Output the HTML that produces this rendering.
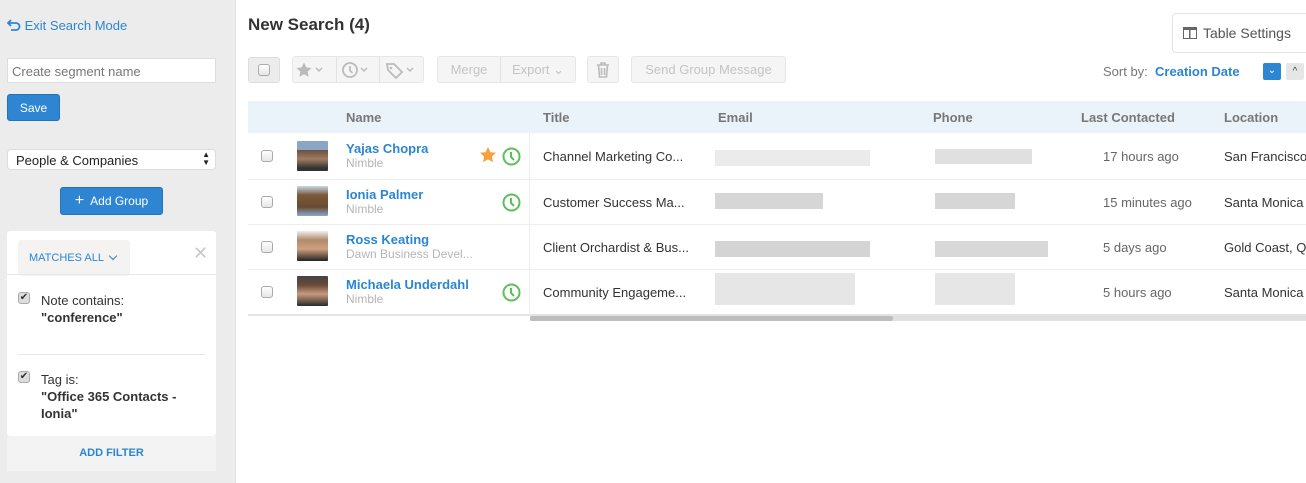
<!DOCTYPE html>
<html><head><meta charset="utf-8"><style>
*{box-sizing:border-box;margin:0;padding:0}
body{width:1306px;height:483px;overflow:hidden;font-family:"Liberation Sans",Arial,sans-serif;font-size:13px;color:#333;background:#fff;position:relative}
.a{position:absolute}
.side{left:0;top:0;width:236px;height:483px;background:#ececec;border-right:1px solid #e0e0e0}
.blue{color:#2b86d2}
.btn{background:#2e86d3;color:#fff;border:1px solid #2473b8;border-radius:3px;font-size:12px;display:flex;align-items:center;justify-content:center}
.cb{width:12px;height:12px;border:1px solid #aaa;border-radius:3px;background:linear-gradient(#fff,#e6e6e6)}
.ck{width:12px;height:12px;border:1px solid #aaa;border-radius:3px;background:#ddd;color:#333;font-size:10px;line-height:10px;text-align:center}
.tb{border:1px solid #e6e6e6;background:#f5f5f5;border-radius:3px;color:#c4c4c4;font-size:13px;display:flex;align-items:center;justify-content:center}
.hd{font-weight:bold;color:#777;font-size:13px;top:110px}
.nm{color:#2b86d2;font-weight:bold;font-size:13px}
.sub{color:#b5b5b5;font-size:12px}
.cell{font-size:13px;color:#333}
.bl{background:#e2e2e2}
.av{width:31px;height:30px;border-radius:1px}
</style></head><body>
<div class="a side"></div>
<div class="a blue" style="left:7px;top:18px;font-size:13px">
<svg width="14" height="12" viewBox="0 0 14 12" style="vertical-align:-1px"><path d="M4 1 L1 4 L4 7 M1 4 H9 A3.5 3.5 0 0 1 9 11 H4" fill="none" stroke="#2b86d2" stroke-width="1.8"/></svg> Exit Search Mode</div>
<div class="a" style="left:7px;top:58px;width:209px;height:25px;background:#fff;border:1px solid #ddd;color:#777;font-size:13px;padding:5px 4px">Create segment name</div>
<div class="a btn" style="left:7px;top:94px;width:53px;height:27px">Save</div>
<div class="a" style="left:7px;top:149px;width:209px;height:21px;background:#fff;border:1px solid #ddd;border-radius:4px;font-size:13px;padding:3px 8px;color:#222">People &amp; Companies<span style="position:absolute;right:5px;top:1px;font-size:8px;line-height:8px">▲<br>▼</span></div>
<div class="a btn" style="left:60px;top:187px;width:103px;height:28px;font-size:12px"><span style="font-size:16px;margin-right:6px">+</span>Add Group</div>
<div class="a" style="left:7px;top:231px;width:209px;height:205px;background:#fff;border-radius:3px"></div>
<div class="a" style="left:18px;top:240px;width:112px;height:36px;background:#f4f3f1;border-radius:3px;color:#2b86d2;font-size:11px;padding:12px 11px">MATCHES ALL &nbsp;<span style="display:inline-block;width:6px;height:6px;border-right:1.3px solid #2b86d2;border-bottom:1.3px solid #2b86d2;transform:rotate(45deg);margin-bottom:2px"></span></div>
<div class="a" style="left:193px;top:243px;color:#c8c8c8;font-size:18px">✕</div>
<div class="a" style="left:7px;top:274px;width:209px;height:1px;background:#e8e8e8"></div>
<div class="a ck" style="left:18px;top:292px">✔</div>
<div class="a" style="left:41px;top:292px;font-size:13px;line-height:17px">Note contains:<br><b>"conference"</b></div>
<div class="a" style="left:18px;top:354px;width:187px;height:1px;background:#e8e8e8"></div>
<div class="a ck" style="left:18px;top:371px">✔</div>
<div class="a" style="left:41px;top:371px;font-size:13px;line-height:17px">Tag is:<br><b>"Office 365 Contacts -<br>Ionia"</b></div>
<div class="a" style="left:7px;top:436px;width:209px;height:35px;background:#f3f3f3;color:#2b86d2;font-weight:bold;font-size:11px;text-align:center;line-height:35px">ADD FILTER</div>

<div class="a" style="left:248px;top:15px;font-size:17px;font-weight:bold;color:#333">New Search (4)</div>
<div class="a" style="left:1172px;top:13px;width:140px;height:40px;border:1px solid #e3e3e3;border-radius:4px;font-size:14px;color:#555;padding:11px 10px"><span style="display:inline-block;width:14px;height:12px;border:1.5px solid #666;vertical-align:-1px;margin-right:6px;background:linear-gradient(90deg,transparent 5px,#666 5px,#666 6.5px,transparent 6.5px);border-top-width:3px"></span>Table Settings</div>

<div class="a tb" style="left:248px;top:57px;width:32px;height:26px;background:#ececec;border-color:#ddd"><div class="cb"></div></div>
<div class="a tb" style="left:292px;top:56px;width:132px;height:27px;justify-content:space-around">
<svg width="36" height="18" viewBox="0 0 36 18"><path d="M9 1.5l2.3 4.9 5.2.6-3.9 3.6 1 5.2L9 13.2 4.4 15.8l1-5.2L1.5 7l5.2-.6z" fill="#bbb"/><path d="M21 7l3 3 3-3" fill="none" stroke="#bbb" stroke-width="1.5"/></svg>
<span style="border-left:1px solid #e2e2e2;border-right:1px solid #e2e2e2;padding:0 4px;height:27px;display:flex;align-items:center"><svg width="34" height="18" viewBox="0 0 34 18"><circle cx="9" cy="9" r="7" fill="none" stroke="#bbb" stroke-width="1.8"/><path d="M9 5v4.5l2.5 2.5" fill="none" stroke="#bbb" stroke-width="1.6"/><path d="M20 7l3 3 3-3" fill="none" stroke="#bbb" stroke-width="1.5"/></svg></span>
<svg width="36" height="18" viewBox="0 0 36 18"><path d="M2 3h7l8 8-6 6-8-8z" fill="none" stroke="#bbb" stroke-width="1.8" transform="rotate(0)"/><circle cx="6" cy="7" r="1.3" fill="#bbb"/><path d="M22 7l3 3 3-3" fill="none" stroke="#bbb" stroke-width="1.5"/></svg></div>
<div class="a tb" style="left:437px;top:56px;width:139px;height:27px"><span style="width:63px;text-align:center;border-right:1px solid #e2e2e2;line-height:25px">Merge</span><span style="flex:1;text-align:center">Export ⌄</span></div>
<div class="a tb" style="left:587px;top:56px;width:32px;height:27px"><svg width="14" height="17" viewBox="0 0 14 17"><path d="M1 4h12M5 4V2h4v2M2.5 4l1 12h7l1-12M5.5 7v7M8.5 7v7" fill="none" stroke="#bbb" stroke-width="1.6"/></svg></div>
<div class="a tb" style="left:631px;top:56px;width:155px;height:27px">Send Group Message</div>
<div class="a" style="left:1103px;top:64px;color:#777;font-size:13px">Sort by: &nbsp;<b class="blue">Creation Date</b></div>
<div class="a" style="left:1263px;top:63px;width:18px;height:17px;background:#2e86d3;border-radius:2px;color:#fff;font-size:10px;text-align:center;line-height:16px">⌄</div>
<div class="a" style="left:1286px;top:63px;width:18px;height:17px;background:#e6e6e6;border-radius:2px;color:#444;font-size:10px;text-align:center;line-height:18px">^</div>

<div class="a" style="left:248px;top:101px;width:1058px;height:32px;background:#eaf2fa"></div>
<div class="a hd" style="left:346px">Name</div>
<div class="a hd" style="left:543px">Title</div>
<div class="a hd" style="left:718px">Email</div>
<div class="a hd" style="left:933px">Phone</div>
<div class="a hd" style="left:1081px">Last Contacted</div>
<div class="a hd" style="left:1224px">Location</div>

<div class="a" style="left:248px;top:179px;width:1058px;height:1px;background:#eee"></div>
<div class="a" style="left:248px;top:224px;width:1058px;height:1px;background:#eee"></div>
<div class="a" style="left:248px;top:269px;width:1058px;height:1px;background:#eee"></div>
<div class="a" style="left:248px;top:314px;width:1058px;height:2px;background:#e3e3e3"></div>
<div class="a" style="left:529px;top:133px;width:1px;height:182px;background:#eee"></div>
<div class="a" style="left:530px;top:316px;width:776px;height:5px;background:#e0e0e0"></div>
<div class="a" style="left:530px;top:316px;width:363px;height:5px;background:#bdbdbd;border-radius:2px"></div>

<div class="a cb" style="left:261px;top:150px"></div>
<div class="a cb" style="left:261px;top:196px"></div>
<div class="a cb" style="left:261px;top:241px"></div>
<div class="a cb" style="left:261px;top:286px"></div>
<div class="a av" style="left:297px;top:141px;background:linear-gradient(#8aa6c4 0,#8aa6c4 30%,#6a5040 30%,#a07c62 60%,#333 90%)"></div>
<div class="a av" style="left:297px;top:186px;background:linear-gradient(#c8d8e8 0,#7a5a3a 30%,#6a4a32 70%,#8aa8d0 100%)"></div>
<div class="a av" style="left:297px;top:231px;background:linear-gradient(#eee 0,#b08a6a 30%,#d0a080 60%,#222 100%)"></div>
<div class="a av" style="left:297px;top:276px;background:linear-gradient(#444 0,#6a4a38 30%,#c89a80 60%,#2a2a2a 100%)"></div>

<div class="a" style="left:346px;top:141px"><div class="nm">Yajas Chopra</div><div class="sub">Nimble</div></div>
<div class="a" style="left:346px;top:187px"><div class="nm">Ionia Palmer</div><div class="sub">Nimble</div></div>
<div class="a" style="left:346px;top:232px"><div class="nm">Ross Keating</div><div class="sub">Dawn Business Devel...</div></div>
<div class="a" style="left:346px;top:277px"><div class="nm">Michaela Underdahl</div><div class="sub">Nimble</div></div>

<svg class="a" style="left:479px;top:146px" width="18" height="18" viewBox="0 0 18 18"><path d="M9 1l2.4 5.2 5.6.6-4.2 3.8 1.2 5.6L9 13.4 4 16.2l1.2-5.6L1 6.8l5.6-.6z" fill="#f6a13a"/></svg>
<svg class="a" style="left:502px;top:147px" width="19" height="19"><circle cx="9.5" cy="9.5" r="8" fill="none" stroke="#5cbf5c" stroke-width="2"/><path d="M9 5v5l3 3" fill="none" stroke="#5cbf5c" stroke-width="2"/></svg>
<svg class="a" style="left:502px;top:193px" width="19" height="19"><circle cx="9.5" cy="9.5" r="8" fill="none" stroke="#5cbf5c" stroke-width="2"/><path d="M9 5v5l3 3" fill="none" stroke="#5cbf5c" stroke-width="2"/></svg>
<svg class="a" style="left:502px;top:283px" width="19" height="19"><circle cx="9.5" cy="9.5" r="8" fill="none" stroke="#5cbf5c" stroke-width="2"/><path d="M9 5v5l3 3" fill="none" stroke="#5cbf5c" stroke-width="2"/></svg>

<div class="a cell" style="left:543px;top:149px">Channel Marketing Co...</div>
<div class="a cell" style="left:543px;top:195px">Customer Success Ma...</div>
<div class="a cell" style="left:543px;top:240px">Client Orchardist &amp; Bus...</div>
<div class="a cell" style="left:543px;top:285px">Community Engageme...</div>

<div class="a bl" style="left:715px;top:150px;width:155px;height:16px;background:#ebebeb"></div>
<div class="a bl" style="left:715px;top:193px;width:108px;height:16px;background:#d6d6d6"></div>
<div class="a bl" style="left:715px;top:241px;width:155px;height:16px;background:#d4d4d4"></div>
<div class="a bl" style="left:715px;top:273px;width:140px;height:32px;background:#e6e6e6"></div>
<div class="a bl" style="left:935px;top:149px;width:97px;height:15px;background:#e0e0e0"></div>
<div class="a bl" style="left:935px;top:193px;width:80px;height:16px;background:#d6d6d6"></div>
<div class="a bl" style="left:935px;top:241px;width:113px;height:16px;background:#d8d8d8"></div>
<div class="a bl" style="left:935px;top:273px;width:80px;height:32px;background:#e6e6e6"></div>

<div class="a cell" style="left:1103px;top:149px;color:#666">17 hours ago</div>
<div class="a cell" style="left:1103px;top:195px;color:#666">15 minutes ago</div>
<div class="a cell" style="left:1103px;top:240px;color:#666">5 days ago</div>
<div class="a cell" style="left:1103px;top:285px;color:#666">5 hours ago</div>
<div class="a cell" style="left:1224px;top:149px;white-space:nowrap">San Francisco</div>
<div class="a cell" style="left:1224px;top:195px;white-space:nowrap">Santa Monica</div>
<div class="a cell" style="left:1224px;top:240px;white-space:nowrap">Gold Coast, Q</div>
<div class="a cell" style="left:1224px;top:285px;white-space:nowrap">Santa Monica</div>
</body></html>
